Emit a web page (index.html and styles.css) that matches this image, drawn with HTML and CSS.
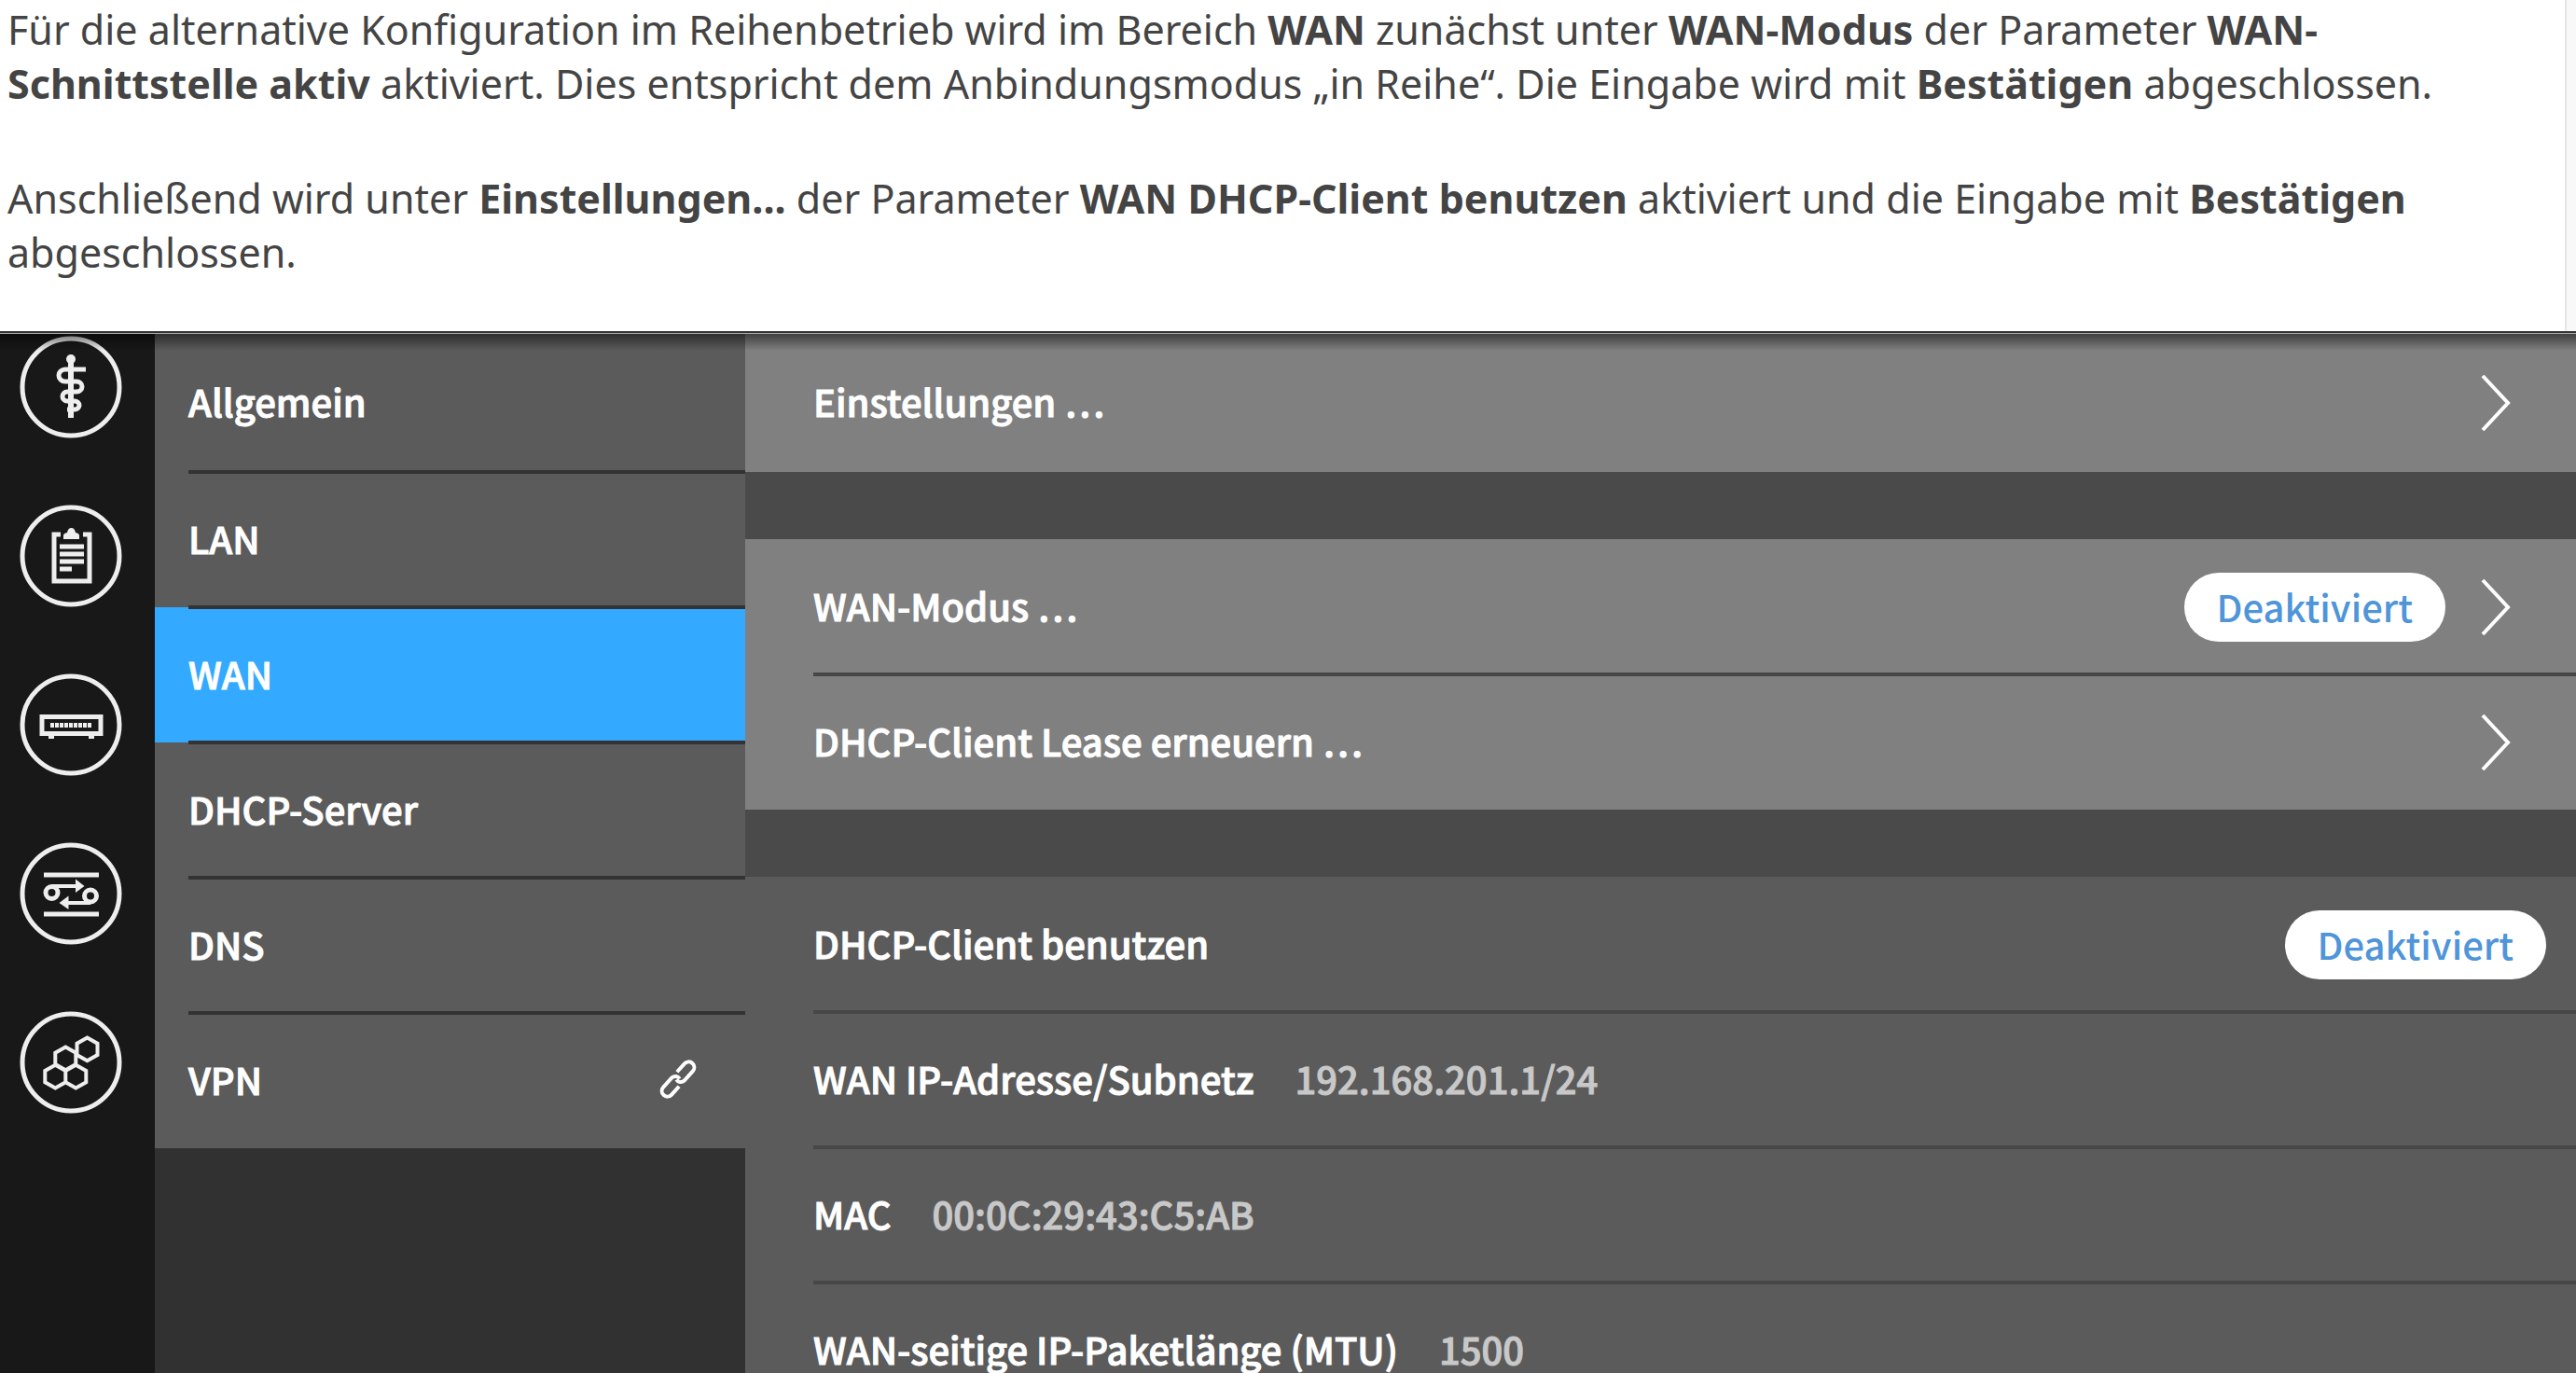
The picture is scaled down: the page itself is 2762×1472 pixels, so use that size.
FILE: index.html
```html
<!DOCTYPE html>
<html lang="de">
<head>
<meta charset="utf-8">
<meta name="viewport" content="width=device-width, initial-scale=1">
<title>WAN-Konfiguration</title>
<link rel="stylesheet" href="styles.css">
</head>
<body>
<article class="guide">
  <p>Für die alternative Konfiguration im Reihenbetrieb wird im Bereich <strong>WAN</strong> zunächst unter <strong>WAN-Modus</strong> der Parameter <strong>WAN-Schnittstelle aktiv</strong> aktiviert. Dies entspricht dem Anbindungsmodus „in Reihe“. Die Eingabe wird mit <strong>Bestätigen</strong> abgeschlossen.</p>
  <p>Anschließend wird unter <strong>Einstellungen...</strong> der Parameter <strong>WAN DHCP-Client benutzen</strong> aktiviert und die Eingabe mit <strong>Bestätigen</strong> abgeschlossen.</p>
</article>
<div class="app">
  <nav class="rail" aria-label="Hauptbereiche">
    <button class="rail-button" type="button" aria-label="Gesundheit">
      <svg viewBox="0 0 110 110"><circle class="ring" cx="55" cy="55" r="52"/><path d="M55 26V88" stroke-width="6"/><circle class="solid" cx="55" cy="25" r="5"/><path d="M71 36H49a7 6.500 0 0 0 0 13H61a6 5.500 0 0 1 0 11H51a5 5 0 0 0 0 10H59a5 4.500 0 0 1 0 9H51" stroke-width="5"/></svg>
    </button>
    <button class="rail-button" type="button" aria-label="Protokoll">
      <svg viewBox="0 0 110 110"><circle class="ring" cx="55" cy="55" r="52"/><path d="M44 32H37V82H75V32H68" stroke-width="5"/><path class="solid" d="M47 37V33Q47 31 51 30Q52 25 55.500 25T60 30Q64 31 64 33V37Z"/><path d="M43 45H69M43 53H69M43 61H69M43 69H56" stroke-width="5"/></svg>
    </button>
    <button class="rail-button" type="button" aria-label="Gerät">
      <svg viewBox="0 0 110 110"><circle class="ring" cx="55" cy="55" r="52"/><path d="M24 46.500H87V64.500H24Z" stroke-width="5"/><path d="M33 55.500H77" stroke-width="5" stroke-dasharray="4 1"/><path d="M31 68.500H37M74 68.500H80" stroke-width="3"/></svg>
    </button>
    <button class="rail-button" type="button" aria-label="Netzwerk">
      <svg viewBox="0 0 110 110"><circle class="ring" cx="55" cy="55" r="52"/><path d="M26 35H85M26 77H85" stroke-width="5"/><circle cx="34.500" cy="54" r="6.500" stroke-width="5"/><circle cx="76" cy="57.500" r="6.500" stroke-width="5"/><path d="M35 47H62M76 65H50" stroke-width="4"/><path class="solid" d="M60 39.500L69.500 47L60 54ZM52.500 57.500L42.500 65L52.500 72Z"/></svg>
    </button>
    <button class="rail-button" type="button" aria-label="System">
      <svg viewBox="0 0 110 110"><circle class="ring" cx="55" cy="55" r="52"/><path d="M72.500 28.500l11 6.200v12.400l-11 6.200l-11-6.200v-12.400zM49.300 38.500l11 6.200v12.400l-11 6.200l-11-6.200v-12.400zM38.300 57.700l11 6.200v12.400l-11 6.200l-11-6.200v-12.400zM60.300 57.700l11 6.200v12.400l-11 6.200l-11-6.200v-12.400z" stroke-width="4"/></svg>
    </button>
  </nav>
  <nav class="menu" aria-label="Netzwerk">
    <ul class="menu-list">
      <li><a class="menu-item" href="#allgemein">Allgemein</a></li>
      <li><a class="menu-item" href="#lan">LAN</a></li>
      <li><a class="menu-item menu-item-active" href="#wan" aria-current="page">WAN</a></li>
      <li><a class="menu-item" href="#dhcp">DHCP-Server</a></li>
      <li><a class="menu-item" href="#dns">DNS</a></li>
      <li><a class="menu-item" href="#vpn">VPN
        <svg class="link-icon" viewBox="0 0 40 40" aria-hidden="true"><path transform="translate(20 20) rotate(-48)" d="M-5 6H-17a6 6 0 0 1 0-12H-3a5.500 5.500 0 0 1 4.500 7M5-6H17a6 6 0 0 1 0 12H3a5.500 5.500 0 0 1-4.500-7"/></svg></a></li>
    </ul>
  </nav>
  <main class="panel">
    <section class="group group-light">
      <button class="row" type="button"><span class="label">Einstellungen …</span><svg class="chevron" viewBox="0 0 32 62"><path d="M2 2L29 31L2 60"/></svg></button>
    </section>
    <section class="group group-light">
      <button class="row" type="button"><span class="label">WAN-Modus …</span><span class="pill">Deaktiviert</span><svg class="chevron" viewBox="0 0 32 62"><path d="M2 2L29 31L2 60"/></svg></button>
      <button class="row" type="button"><span class="label">DHCP-Client Lease erneuern …</span><svg class="chevron" viewBox="0 0 32 62"><path d="M2 2L29 31L2 60"/></svg></button>
    </section>
    <section class="group">
      <div class="row row-info"><span class="label">DHCP-Client benutzen</span><button class="pill" type="button">Deaktiviert</button></div>
      <div class="row row-info"><span class="label">WAN IP-Adresse/Subnetz</span><span class="value">192.168.201.1/24</span></div>
      <div class="row row-info"><span class="label">MAC</span><span class="value">00:0C:29:43:C5:AB</span></div>
      <div class="row row-info"><span class="label">WAN-seitige IP-Paketlänge (MTU)</span><span class="value">1500</span></div>
    </section>
  </main>
</div>
</body>
</html>
```
FILE: styles.css
```css
* {
  box-sizing: border-box;
}

body {
  margin: 0;
  height: 100vh;
  overflow: hidden;
  display: flex;
  flex-direction: column;
  background: #f8f8f8;
}

.guide {
  flex: none;
  margin-right: 10px;
  padding: 3px 8px 55px;
  border-right: 2px solid #e6e6e6;
  background: #fff;
  color: #444;
  font: 43px/58px "Noto Sans", sans-serif;
}

.guide p {
  margin: 0 0 65px;
}

.guide p:last-child {
  margin-bottom: 0;
}

.app {
  position: relative;
  flex: 1;
  min-height: 0;
  display: grid;
  grid-template-columns: 166px 633px 1fr;
  border-top: 2px solid #333;
  background: #181818;
  color: #fff;
  font: 500 40px/60px "Noto Sans CJK SC", sans-serif;
  -webkit-text-stroke: 1px currentColor;
}

/* shadow cast by the header above the three columns */
.app::before {
  content: "";
  position: absolute;
  top: 0;
  left: 0;
  right: 0;
  height: 18px;
  background: linear-gradient(rgba(0, 0, 0, 0.5), transparent);
  border-top: 1px solid #aaa;
}

button {
  border: 0;
  background: none;
  color: inherit;
  font: inherit;
  cursor: pointer;
}

.rail {
  display: flex;
  flex-direction: column;
  align-items: center;
  gap: 71px;
  padding: 3px 15px 0 0;
}

.rail-button {
  flex: none;
  width: 110px;
  height: 110px;
  padding: 0;
}

.rail-button svg {
  display: block;
  fill: none;
  stroke: #eee;
}

.rail-button .ring {
  stroke-width: 5px;
}

.rail-button .solid {
  fill: #eee;
  stroke: none;
}

.menu {
  background: #313131;
}

.menu-list {
  margin: 0;
  padding: 0;
  list-style: none;
  background: #5b5b5b;
}

.menu-list li {
  position: relative;
}

.menu-item {
  display: flex;
  align-items: center;
  justify-content: space-between;
  height: 145px;
  padding: 0 52px 4px 36px;
  color: #fff;
  text-decoration: none;
}

.menu-item-active {
  background: #33a9ff;
}

.menu-list li:not(:last-child)::after,
.row:not(:last-child)::after {
  content: "";
  position: absolute;
  z-index: 1;
  left: 36px;
  right: 0;
  bottom: -2px;
  height: 4px;
  background: #333;
}

.link-icon {
  width: 40px;
  height: 40px;
  overflow: visible;
  fill: none;
  stroke: #fff;
  stroke-width: 4px;
}

.panel {
  display: flex;
  flex-direction: column;
  gap: 72px;
  min-width: 0;
  overflow: hidden;
  background: #4a4a4a;
}

.group {
  flex: none;
  background: #5b5b5b;
}

.group-light {
  background: #808080;
}

.row {
  position: relative;
  display: flex;
  align-items: center;
  width: 100%;
  height: 145px;
  padding: 0 70px 0 73px;
  text-align: left;
}

/* the topmost rows reach up under the header shadow */
.menu-list li:first-child .menu-item,
.group:first-child .row {
  height: 149px;
}

.row-info {
  padding-right: 32px;
}

.row:not(:last-child)::after {
  left: 73px;
  background: #474747;
}

.label,
.value {
  padding-bottom: 3px;
}

.value {
  margin-left: 44px;
  color: #c8c8c8;
}

.pill {
  margin-left: auto;
  padding: 6px 35px 8px;
  border-radius: 37px;
  background: #fff;
  color: #4f95d9;
  -webkit-text-stroke: 0;
}

.chevron {
  width: 32px;
  height: 62px;
  margin-left: auto;
  fill: none;
  stroke: #fff;
  stroke-width: 4px;
}

.pill + .chevron {
  margin-left: 38px;
}
```
